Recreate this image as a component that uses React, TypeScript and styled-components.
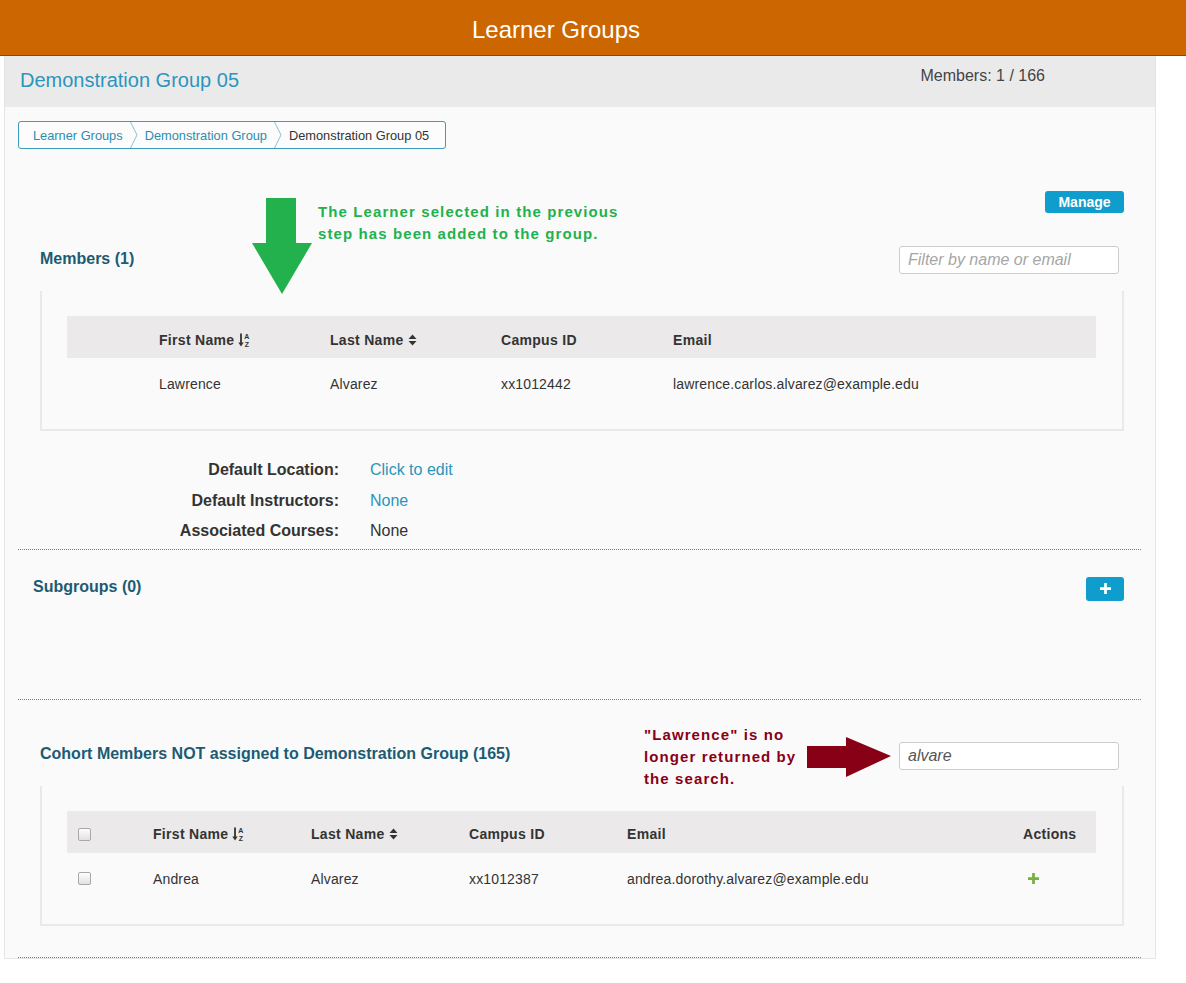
import * as React from "react";
import styled, { createGlobalStyle } from "styled-components";

const GlobalStyle = createGlobalStyle`
  body {
    margin: 0;
    background: #fff;
    font-family: "Liberation Sans", Arial, sans-serif;
    color: #333;
  }
`;

const Page = styled.div`
  position: relative;
  width: 1186px;
  min-height: 983px;
`;

const Header = styled.header`
  height: 55px;
  background: #cc6600;
  border-bottom: 1px solid #8a4808;
  display: flex;
  align-items: center;
  justify-content: center;
  padding-right: 74px;
  color: #fff;
`;

const HeaderTitle = styled.h1`
  margin: 4px 0 0 0;
  font-size: 24px;
  font-weight: 400;
`;

const Panel = styled.div`
  margin-left: 4px;
  width: 1150px;
  border: 1px solid #e4e4e4;
  border-top: none;
  background: #fafafa;
`;

const TopBar = styled.div`
  height: 51px;
  background: #ebeaeb;
  display: flex;
  justify-content: space-between;
  align-items: flex-start;
`;

const GroupTitle = styled.h2`
  margin: 12px 0 0 15px;
  font-size: 20px;
  line-height: 24px;
  font-weight: 400;
  color: #2b95bd;
`;

const MemberCount = styled.div`
  margin: 10px 110px 0 0;
  font-size: 16px;
  line-height: 20px;
  color: #444;
`;

const Body = styled.div`
  padding: 14px 14px 0 13px;
`;

const Crumbs = styled.nav`
  display: inline-flex;
  align-items: stretch;
  height: 26px;
  border: 1px solid #3c9cbc;
  border-radius: 3px;
  font-size: 12.8px;
  background: #fcfcfc;
`;

const Crumb = styled.span<{ $current?: boolean; $first?: boolean }>`
  display: flex;
  align-items: center;
  padding-left: ${({ $first }) => ($first ? "14px" : "0")};
  padding-right: ${({ $current }) => ($current ? "16px" : "7px")};
  color: ${({ $current }) => ($current ? "#333" : "#2a8db3")};
`;

const CrumbSep = styled.svg`
  width: 8px;
  height: 26px;
  margin-right: 7px;
`;

const ManageRow = styled.div`
  display: flex;
  justify-content: flex-end;
  margin: 42px 17px 0 0;
`;

const BlueButton = styled.button<{ $wide?: boolean }>`
  height: ${({ $wide }) => ($wide ? "22px" : "24px")};
  width: ${({ $wide }) => ($wide ? "79px" : "38px")};
  border: none;
  border-radius: 3px;
  background: #0e9dcc;
  color: #fff;
  font-family: inherit;
  font-size: 14px;
  font-weight: 700;
  display: flex;
  align-items: center;
  justify-content: center;
  padding: 0;
`;

const SectionRow = styled.div<{ $top: number; $left: number; $right?: number }>`
  display: flex;
  align-items: center;
  justify-content: space-between;
  margin-top: ${({ $top }) => $top}px;
  padding: 0 ${({ $right }) => $right ?? 22}px 0 ${({ $left }) => $left}px;
`;

const SectionTitle = styled.h3`
  margin: 0 0 3px 0;
  font-size: 16px;
  font-weight: 700;
  color: #1d5b72;
`;

const Filter = styled.input`
  box-sizing: border-box;
  width: 220px;
  height: 28px;
  border: 1px solid #ccc;
  border-radius: 3px;
  padding: 0 8px;
  font-family: inherit;
  font-size: 16px;
  font-style: italic;
  color: #555;
  background: #fff;
  &::placeholder {
    color: #a6a6a6;
  }
`;

const TableBox = styled.div<{ $top: number }>`
  margin: ${({ $top }) => $top}px 17px 0 22px;
  border: 2px solid #e9e9e9;
  border-top: none;
  padding: 25px 26px 19px 25px;
`;

const Row = styled.div<{ $cols: string; $head?: boolean }>`
  display: grid;
  grid-template-columns: ${({ $cols }) => $cols};
  align-items: center;
  box-sizing: border-box;
  height: ${({ $head }) => ($head ? "42px" : "52px")};
  padding-top: ${({ $head }) => ($head ? "5px" : "0")};
  background: ${({ $head }) => ($head ? "#ebe9e9" : "transparent")};
  font-size: 14px;
  font-weight: ${({ $head }) => ($head ? 700 : 400)};
  letter-spacing: ${({ $head }) => ($head ? "0.3px" : "0.15px")};
  color: #333;
`;

const Cell = styled.div<{ $pad?: number }>`
  display: flex;
  align-items: center;
  gap: 4px;
  padding-left: ${({ $pad }) => $pad ?? 0}px;
`;

const Check = styled.span`
  width: 11px;
  height: 11px;
  border: 1px solid #a8a8a8;
  border-radius: 2px;
  background: linear-gradient(#fdfdfd, #e2e2e2);
`;

const Details = styled.div`
  display: grid;
  grid-template-columns: 321px 1fr;
  column-gap: 31px;
  margin: 24px 0 2px 0;
`;

const Label = styled.div`
  text-align: right;
  font-size: 16px;
  font-weight: 700;
  line-height: 30.5px;
  color: #333;
`;

const Value = styled.div<{ $link?: boolean }>`
  font-size: 16px;
  line-height: 30.5px;
  color: ${({ $link }) => ($link ? "#2b95bd" : "#333")};
`;

const Divider = styled.hr`
  margin: 0;
  border: none;
  border-top: 1px dotted #8f7458;
`;

const Spacer = styled.div<{ $h: number }>`
  height: ${({ $h }) => $h}px;
`;

const Note = styled.div<{ $color: string; $x: number; $y: number }>`
  position: absolute;
  left: ${({ $x }) => $x}px;
  top: ${({ $y }) => $y}px;
  color: ${({ $color }) => $color};
  font-size: 15px;
  font-weight: 700;
  line-height: 22px;
  letter-spacing: 1.1px;
  white-space: nowrap;
`;

const Arrow = styled.svg<{ $x: number; $y: number }>`
  position: absolute;
  left: ${({ $x }) => $x}px;
  top: ${({ $y }) => $y}px;
`;

function SortAlpha() {
  return (
    <svg width="13" height="16" viewBox="0 0 13 16">
      <path d="M3 1.5v11" stroke="#333" strokeWidth="1.8" />
      <path d="M0.3 10.5l2.7 4 2.7-4z" fill="#333" />
      <text x="9" y="6.5" fontSize="7" textAnchor="middle" fontFamily="Liberation Sans" fill="#333">A</text>
      <text x="9" y="14.5" fontSize="7" textAnchor="middle" fontFamily="Liberation Sans" fill="#333">Z</text>
    </svg>
  );
}

function SortBoth() {
  return (
    <svg width="9" height="12" viewBox="0 0 9 12">
      <path d="M4.5 0.5L8.5 5H0.5z M4.5 11.5L0.5 7h8z" fill="#333" />
    </svg>
  );
}

function Plus({ color, size }: { color: string; size: number }) {
  return (
    <svg width={size} height={size} viewBox="0 0 12 12">
      <path d="M4.5 0h3v4.5H12v3H7.5V12h-3V7.5H0v-3h4.5z" fill={color} />
    </svg>
  );
}

function Chevron() {
  return (
    <CrumbSep viewBox="0 0 8 26">
      <polyline points="0.5,0 7,13 0.5,26" fill="none" stroke="#8cc2d4" strokeWidth="1" />
    </CrumbSep>
  );
}

const MEMBER_COLS = "92px 171px 171px 172px 1fr";
const COHORT_COLS = "86px 158px 158px 158px 1fr 73px";

export default function App() {
  return (
    <Page>
      <GlobalStyle />
      <Header>
        <HeaderTitle>Learner Groups</HeaderTitle>
      </Header>
      <Panel>
        <TopBar>
          <GroupTitle>Demonstration Group 05</GroupTitle>
          <MemberCount>Members: 1 / 166</MemberCount>
        </TopBar>
        <Body>
          <Crumbs>
            <Crumb $first>Learner Groups</Crumb>
            <Chevron />
            <Crumb>Demonstration Group</Crumb>
            <Chevron />
            <Crumb $current>Demonstration Group 05</Crumb>
          </Crumbs>

          <ManageRow>
            <BlueButton $wide>Manage</BlueButton>
          </ManageRow>

          <SectionRow $top={33} $left={22}>
            <SectionTitle>Members (1)</SectionTitle>
            <Filter placeholder="Filter by name or email" />
          </SectionRow>

          <TableBox $top={17}>
            <Row $head $cols={MEMBER_COLS}>
              <Cell />
              <Cell>First Name <SortAlpha /></Cell>
              <Cell>Last Name <SortBoth /></Cell>
              <Cell>Campus ID</Cell>
              <Cell>Email</Cell>
            </Row>
            <Row $cols={MEMBER_COLS}>
              <Cell />
              <Cell>Lawrence</Cell>
              <Cell>Alvarez</Cell>
              <Cell>xx1012442</Cell>
              <Cell>lawrence.carlos.alvarez@example.edu</Cell>
            </Row>
          </TableBox>

          <Details>
            <Label>Default Location:</Label>
            <Value $link>Click to edit</Value>
            <Label>Default Instructors:</Label>
            <Value $link>None</Value>
            <Label>Associated Courses:</Label>
            <Value>None</Value>
          </Details>

          <Divider />

          <SectionRow $top={27} $left={15} $right={17}>
            <SectionTitle>Subgroups (0)</SectionTitle>
            <BlueButton>
              <Plus color="#fff" size={11} />
            </BlueButton>
          </SectionRow>
          <Spacer $h={98} />

          <Divider />

          <SectionRow $top={42} $left={22}>
            <SectionTitle>Cohort Members NOT assigned to Demonstration Group (165)</SectionTitle>
            <Filter defaultValue="alvare" />
          </SectionRow>

          <TableBox $top={16}>
            <Row $head $cols={COHORT_COLS}>
              <Cell $pad={11}><Check /></Cell>
              <Cell>First Name <SortAlpha /></Cell>
              <Cell>Last Name <SortBoth /></Cell>
              <Cell>Campus ID</Cell>
              <Cell>Email</Cell>
              <Cell>Actions</Cell>
            </Row>
            <Row $cols={COHORT_COLS}>
              <Cell $pad={11}><Check /></Cell>
              <Cell>Andrea</Cell>
              <Cell>Alvarez</Cell>
              <Cell>xx1012387</Cell>
              <Cell>andrea.dorothy.alvarez@example.edu</Cell>
              <Cell $pad={5}><Plus color="#76b043" size={11} /></Cell>
            </Row>
          </TableBox>

          <Spacer $h={31} />
          <Divider />
        </Body>
      </Panel>

      <Arrow $x={252} $y={198} width="60" height="96" viewBox="0 0 60 96">
        <path d="M14 0h30v45h16L30 96 0 45h14z" fill="#22b14c" />
      </Arrow>
      <Note $color="#22b14c" $x={318} $y={201}>
        The Learner selected in the previous
        <br />
        step has been added to the group.
      </Note>

      <Arrow $x={807} $y={737} width="84" height="40" viewBox="0 0 84 40">
        <path d="M0 9h39V0l45 19-45 21V31H0z" fill="#880015" />
      </Arrow>
      <Note $color="#880015" $x={644} $y={724}>
        "Lawrence" is no
        <br />
        longer returned by
        <br />
        the search.
      </Note>
    </Page>
  );
}
